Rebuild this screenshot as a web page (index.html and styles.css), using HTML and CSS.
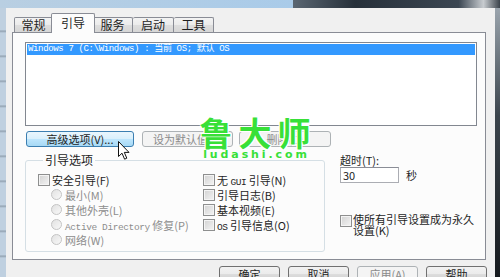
FILE: index.html
```html
<!DOCTYPE html>
<html lang="zh-CN">
<head>
  <meta charset="UTF-8">
  <title>系统配置</title>
  <link rel="stylesheet" href="styles.css">
</head>
<body>
  <div class="titlebar">
    <div class="title-light"></div>
    <div class="title-dark"></div>
  </div>

  <div class="main">
    <div class="frame-left"></div>

    <div class="dialog">
      <div class="tabs">
        <div class="tab tab-1">常规</div>
        <div class="tab tab-active">引导</div>
        <div class="tab">服务</div>
        <div class="tab tab-wide">启动</div>
        <div class="tab">工具</div>
      </div>

      <div class="panel">
        <div class="listbox">
          <div class="list-row">Windows 7 (C:\Windows) : 当前 OS; 默认 OS</div>
        </div>

        <div class="button-row">
          <button class="btn btn-hover btn-advanced">高级选项(V)...</button>
          <button class="btn btn-disabled btn-default">设为默认值(S)</button>
          <button class="btn btn-disabled btn-delete">删除(D)</button>
        </div>

        <div class="lower">
          <fieldset class="group">
            <legend>引导选项</legend>
            <div class="group-cols">
              <div class="col-left">
                <div class="opt"><span class="check"></span><span>安全引导(F)</span></div>
                <div class="opt opt-sub disabled"><span class="radio"></span><span>最小(M)</span></div>
                <div class="opt opt-sub disabled"><span class="radio"></span><span>其他外壳(L)</span></div>
                <div class="opt opt-sub disabled"><span class="radio"></span><span><span class="mono">Active Directory</span> 修复(P)</span></div>
                <div class="opt opt-sub disabled"><span class="radio"></span><span>网络(W)</span></div>
              </div>
              <div class="col-right">
                <div class="opt"><span class="check"></span><span>无 <span class="mono">GUI</span> 引导(N)</span></div>
                <div class="opt"><span class="check"></span><span>引导日志(B)</span></div>
                <div class="opt"><span class="check"></span><span>基本视频(E)</span></div>
                <div class="opt"><span class="check"></span><span><span class="mono">OS</span> 引导信息(O)</span></div>
              </div>
            </div>
          </fieldset>

          <div class="side">
            <div class="timeout-label">超时(T):</div>
            <div class="timeout-row">
              <div class="input">30</div>
              <span>秒</span>
            </div>
            <div class="permanent">
              <span class="check"></span>
              <span class="permanent-text">使所有引导设置成为永久设置(K)</span>
            </div>
          </div>
        </div>
      </div>

      <div class="footer">
        <button class="btn">确定</button>
        <button class="btn">取消</button>
        <button class="btn btn-disabled">应用(A)</button>
        <button class="btn">帮助</button>
      </div>

      <div class="watermark">
        <div class="wm-big">鲁大师</div>
        <div class="wm-small">ludashi.com</div>
      </div>

      <svg class="cursor" width="12" height="19" viewBox="0 0 12 19">
        <path d="M0.5 0.5 L0.5 15.5 L4 12.2 L6.6 18.2 L8.8 17.2 L6.3 11.4 L11 11.4 Z" fill="#fff" stroke="#111" stroke-width="1"/>
      </svg>
    </div>

    <div class="frame-right"></div>
  </div>
</body>
</html>
```

FILE: styles.css
```css
body {
  margin: 0;
  width: 500px;
  height: 277px;
  overflow: hidden;
  background-color: #2a3038;
  font-family: "Noto Sans CJK SC", "Liberation Sans", sans-serif;
  font-size: 11px;
  color: #1e1e1e;
}

.titlebar {
  display: flex;
  height: 8px;
}

.title-light {
  width: 293px;
  background: linear-gradient(to right, #b9cfe2, #a9cbe9);
}

.title-dark {
  flex: 1;
  background: linear-gradient(to right, #5a6672, #26303a 30%, #3b4652 80%, #c8ccd0 92%, #3a424a);
}

.main {
  display: flex;
  height: 269px;
}

.frame-left {
  width: 6px;
  background: repeating-linear-gradient(to bottom, #bfd0e0 0, #bfd0e0 22px, #8f9fae 23px, #bfd0e0 25px);
}

.frame-right {
  width: 5px;
  background: linear-gradient(to bottom, #9aa4ad, #3b444c 40%, #15191d);
}

.dialog {
  position: relative;
  width: 489px;
  background-color: #f0f0f0;
  padding-left: 6px;
  box-sizing: border-box;
}

/* tabs */
.tabs {
  display: flex;
  align-items: flex-end;
  height: 19px;
  margin-top: 5px;
  padding-left: 2px;
}

.tab {
  width: 40px;
  height: 15px;
  box-sizing: border-box;
  border: 1px solid #898c95;
  border-bottom: none;
  border-left: none;
  border-radius: 2px 2px 0 0;
  background: linear-gradient(#f3f3f3, #ebebeb 50%, #dedede 50%, #d6d6d6);
  font-size: 12px;
  line-height: 14px;
  text-align: center;
}

.tab-1 {
  width: 39px;
  border-left: 1px solid #898c95;
}

.tab-wide {
  width: 41px;
}

.tab-active {
  position: relative;
  z-index: 1;
  width: 44px;
  height: 20px;
  margin: 0 -2px -1px -2px;
  border-left: 1px solid #898c95;
  background: #fcfcfc;
  line-height: 17px;
}

.panel {
  width: 474px;
  height: 228px;
  box-sizing: border-box;
  border: 1px solid #898c95;
  background-color: #fcfcfc;
  padding: 9px 8px 0 12px;
}

.listbox {
  width: 452px;
  height: 84px;
  box-sizing: border-box;
  border: 1px solid #828790;
  background-color: #fff;
  padding: 1px;
}

.list-row {
  height: 11px;
  background-color: #3399ff;
  color: #fff;
  font-family: "Liberation Mono", "Noto Sans CJK SC", monospace;
  font-size: 9px;
  letter-spacing: -0.35px;
  line-height: 11px;
  white-space: nowrap;
  padding-left: 1px;
}

/* buttons */
.button-row {
  display: flex;
  margin-top: 5px;
  padding-left: 1px;
}

.btn {
  height: 16px;
  box-sizing: border-box;
  border: 1px solid #707070;
  border-radius: 3px;
  background: linear-gradient(#f2f2f2, #ebebeb 50%, #dddddd 50%, #cfcfcf);
  font-family: "Noto Sans CJK SC", sans-serif;
  font-size: 11px;
  line-height: 13px;
  color: #1e1e1e;
  padding: 0;
}

.btn-hover {
  border-color: #3c7fb1;
  background: linear-gradient(#eaf6fd, #d9f0fc 50%, #bee6fd 50%, #a7d9f5);
}

.btn-disabled {
  border-color: #adb2b5;
  background: #f4f4f4;
  color: #8a8a8a;
}

.btn-advanced {
  width: 108px;
}

.btn-default {
  width: 91px;
  margin-left: 8px;
}

.btn-delete {
  width: 92px;
  margin-left: 6px;
}

/* lower area */
.lower {
  display: flex;
  margin-top: 6px;
}

.group {
  width: 305px;
  height: 99px;
  box-sizing: border-box;
  margin: 0;
  padding: 5px 0 0 12px;
  border: 1px solid #d5dfe5;
  border-radius: 3px;
}

.group legend {
  margin-left: 5px;
  padding: 0 2px;
  font-size: 12px;
  line-height: 14px;
}

.group-cols {
  display: flex;
}

.col-left {
  width: 165px;
}

.opt {
  display: flex;
  align-items: center;
  height: 15px;
  white-space: nowrap;
}

.opt-sub {
  padding-left: 13px;
}

.disabled {
  color: #8d8d8d;
}

.mono {
  font-family: "Liberation Mono", monospace;
  font-size: 9.5px;
  letter-spacing: -0.4px;
}

.check {
  width: 12px;
  height: 12px;
  box-sizing: border-box;
  border: 1px solid #8e8f8f;
  background: linear-gradient(135deg, #d2d2d2, #f4f4f4);
  box-shadow: inset 0 0 0 1px #f4f4f4;
  margin-right: 2px;
  flex-shrink: 0;
}

.radio {
  width: 11px;
  height: 11px;
  box-sizing: border-box;
  border: 1px solid #c4c4c4;
  border-radius: 50%;
  background: linear-gradient(135deg, #e2e2e2, #f8f8f8);
  margin-right: 3px;
  flex-shrink: 0;
}

.side {
  margin-left: 15px;
}

.timeout-label {
  line-height: 14px;
}

.timeout-row {
  display: flex;
  align-items: center;
  gap: 7px;
}

.input {
  width: 59px;
  height: 16px;
  box-sizing: border-box;
  border: 1px solid #abadb3;
  border-top-color: #8a8d96;
  background-color: #fff;
  padding-left: 2px;
  line-height: 14px;
}

.permanent {
  display: flex;
  align-items: flex-start;
  margin-top: 31px;
}

.permanent .check {
  margin-top: 1px;
  margin-right: 1px;
}

.permanent-text {
  width: 124px;
  line-height: 11px;
}

/* footer buttons */
.footer {
  display: flex;
  justify-content: flex-end;
  gap: 8px;
  margin-top: 6px;
  padding-right: 8px;
}

.footer .btn {
  width: 61px;
}

/* overlays */
.watermark {
  position: absolute;
  left: 184px;
  top: 106px;
  width: 130px;
  text-align: center;
}

.wm-big {
  font-size: 33px;
  font-weight: bold;
  line-height: 36px;
  letter-spacing: 6px;
  padding-left: 6px;
  color: #38e038;
  text-shadow: 1px 1px 0 #fff, -1px -1px 0 #fff, 1px -1px 0 #fff, -1px 1px 0 #fff;
}

.wm-small {
  font-family: "DejaVu Sans", sans-serif;
  font-size: 11px;
  font-weight: bold;
  line-height: 10px;
  letter-spacing: 2.9px;
  padding-left: 3px;
  color: #38e038;
}

.cursor {
  position: absolute;
  left: 112px;
  top: 133px;
}
```
